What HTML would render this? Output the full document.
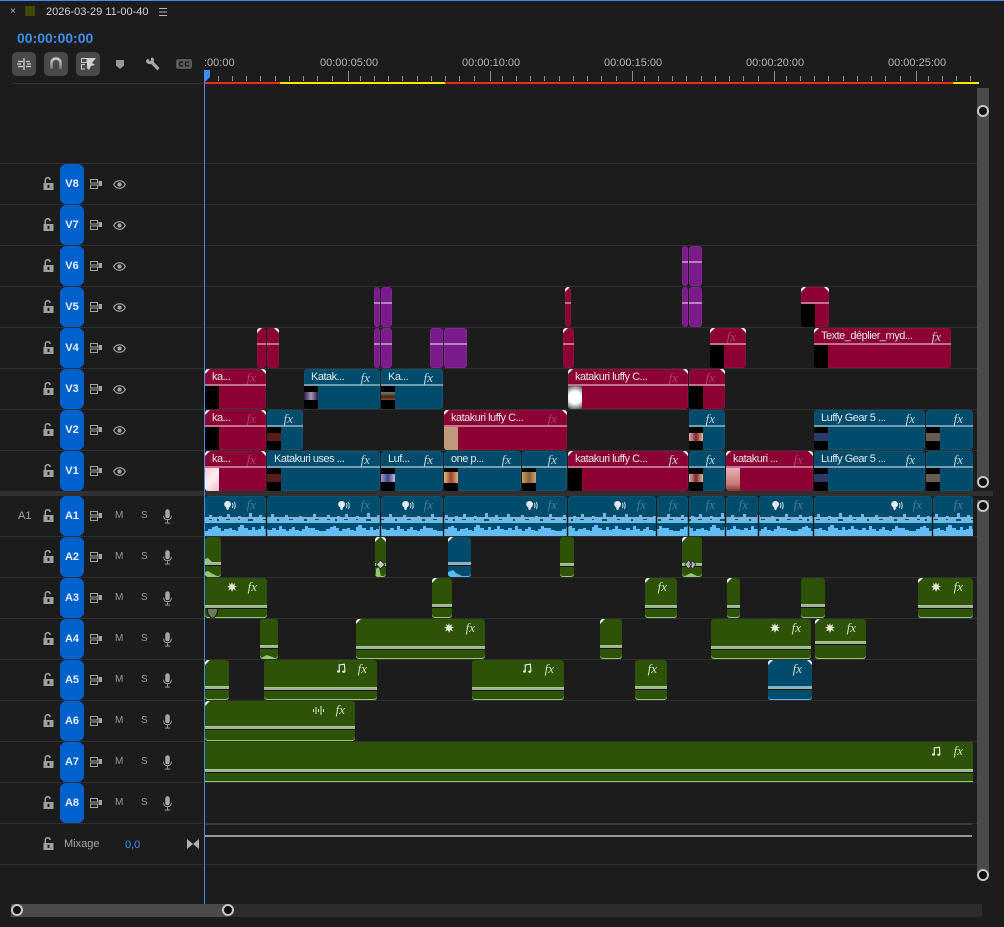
<!DOCTYPE html>
<html><head><meta charset="utf-8"><title>Timeline</title>
<style>
*{box-sizing:border-box}
html,body{margin:0;padding:0;background:#1c1c1c}
body{width:1004px;height:927px;position:relative;overflow:hidden;font-family:"Liberation Sans",sans-serif;color:#bbb}
.abs,.s,.h,.row,.c,.k,.h svg,.h span{position:absolute}
.s{left:0;width:977px;height:1px;background:#303030}
.row{left:0;width:977px;height:41px}
.h{left:0;width:204px;height:41px}
.k{left:60px;top:0;width:24px;height:40px;background:#0060cc;border-radius:6px;color:#e8f0fa;font:bold 11px/40px "Liberation Sans",sans-serif;text-align:center}
.h .m,.h .o{font-size:10px;line-height:10px;color:#999;top:15px}
.h .m{left:115px}.h .o{left:141px}
.c{top:0;height:40px;border-radius:3px;overflow:hidden;box-shadow:inset 0 0 0 1px rgba(255,255,255,.05)}
.c:after{content:"";position:absolute;left:0;right:0;top:15px;height:2px;background:rgba(255,255,255,.45)}
.n:after{display:none}
.r{background:#8c0034}.b{background:#014c6d}.p{background:#7b1a8a}.g{background:#2e5308}
.c b{position:absolute;left:7px;top:1px;font:normal 11px/14px "Liberation Sans",sans-serif;letter-spacing:-.5px;color:#e2e8ec;white-space:nowrap}
.c i{position:absolute;right:10px;top:1px;font:italic 13px/15px "Liberation Serif",serif;color:#c5d3d9}
.d i{color:rgba(255,255,255,.26)}
.c u{position:absolute;left:0;top:17px;bottom:0;width:13.500px;background:#000;text-decoration:none}
.c u s{position:absolute;left:0;top:6px;width:100%;height:8px;display:block}
.tl:before{content:"";position:absolute;top:0;left:0;width:0;height:0;border-top:5px solid #eee;border-right:5px solid transparent;z-index:2}
.trx{position:absolute;right:0;top:0;width:0;height:0;border-top:5px solid #eee;border-left:5px solid transparent;z-index:2}
.a{box-shadow:inset 0 -1px 0 #94c96f}
.a:after{top:var(--l);height:4px;background:linear-gradient(#9fcf7c 0 1px,#a5aea0 1px 3px,#101a06 3px 4px)}
.ab{box-shadow:inset 0 -1px 0 #5cb8f0}
.ab:after{background:linear-gradient(#5cb8f0 0 1px,#a5aea0 1px 3px,#101a06 3px 4px)}
.a i{color:#d4dfc5}
.a svg{position:absolute;left:0;top:0}
.f{position:absolute}
.lb{position:absolute;top:57px;font-size:11px;line-height:12px;color:#b5b5b5}
.btn{position:absolute;top:52px;width:24px;height:24px;border-radius:5px;background:#4a4a4a}
.knob{position:absolute;width:12px;height:12px;border-radius:50%;background:#0e0e0e;border:2px solid #c8c8c8}
</style></head><body>
<svg width="0" height="0" style="position:absolute">
<defs>
<symbol id="lock" viewBox="0 0 11 13"><path d="M.5 6h10v7H.5z" fill="#a0a0a0"/><path d="M2.300 6V3C2.300 1.500 3.300.7 4.700.7S7 1.500 7 3" fill="none" stroke="#a0a0a0" stroke-width="1.500"/><rect x="4.500" y="7.800" width="2" height="3.200" fill="#1c1c1c"/></symbol>
<symbol id="out" viewBox="0 0 12 10"><path d="M.5.5h7v3.500h-7zM.5 6h7v3.500h-7z" fill="none" stroke="#a5a5a5"/><path d="M8.500 2H12v5H8.500z" fill="#a5a5a5"/></symbol>
<symbol id="eye" viewBox="0 0 14 10"><path d="M.5 5C2.200 2 4.500.8 7 .8S11.800 2 13.500 5C11.800 8 9.500 9.200 7 9.200S2.200 8 .5 5z" fill="none" stroke="#a5a5a5" stroke-width="1.300"/><circle cx="7" cy="5" r="2.400" fill="#a5a5a5"/></symbol>
<symbol id="mic" viewBox="0 0 10 16"><rect x="2.500" y="0" width="5" height="10" rx="2.500" fill="#a5a5a5"/><path d="M.7 7c0 3 1.800 4.500 4.300 4.500S9.300 10 9.300 7M5 11.500V15M2 15.300h6" fill="none" stroke="#a5a5a5"/></symbol>
<symbol id="star" viewBox="0 0 12 12"><path d="M6 0l1 3.500L10 1 8.700 4.500 12 5 8.900 6.800 11 10 7.500 8.500 6 12 4.800 8.500 1.500 10 3 6.800 0 5.500 3.400 4.500 2 1l2.800 2.200z" fill="#e3e8d8"/></symbol>
<symbol id="note" viewBox="0 0 10 11"><path d="M2.500 8.500V1.500L8.200.8l.6 7.700" fill="none" stroke="#e3e8d8" stroke-width="1.300"/><ellipse cx="1.700" cy="8.800" rx="1.700" ry="1.300" fill="#e3e8d8"/><ellipse cx="7.500" cy="9" rx="1.700" ry="1.300" fill="#e3e8d8"/></symbol>
<symbol id="sp" viewBox="0 0 12 9"><path d="M3.500 0C5.500 0 7 1.300 7 3.300S5.700 6 5.200 6.500 5 9 3.500 9 2.700 7 2 6.300.2 5 .2 3.300 1.500 0 3.500 0z" fill="#dfe8ec"/><path d="M8.300 2c.8 1.500.8 3.500 0 5M10.300 1c1.100 2.200 1.100 5 0 7" fill="none" stroke="#cfdbe0"/></symbol>
<g id="wv">
<path d="M0 6V5H4V3H7V5H14V4H17V5H22V2H25V5H33V4H36V5H44V1H47V5H54V3H57V5H66V2H69V5H80V3H83V5H94V4H97V5H108V2H111V5H118V11H0Z" fill="#62bdf5"/>
<path d="M0 24V19H3V17H7V15H10V14H13V16H16V19H19V17H24V16H27V18H31V19H33V15H35V13H39V16H43V18H47V15H50V18H53V17H56V14H59V17H63V18H67V16H71V18H74V14H77V17H81V19H84V17H87V15H90V18H94V19H97V17H100V14H103V16H107V16H110V18H114V19H118V24Z" fill="#62bdf5"/>
<path d="M4 7h3v1H4zM12 7h2v2h-2zM21 7h4v1h-4zM33 7h2v1h-2zM43 7h5v2h-5zM58 7h3v1h-3zM72 7h2v2h-2zM84 7h4v1h-4zM99 7h3v2h-3zM110 7h4v1h-4z" fill="#0b4a68"/>
</g>
</defs>
</svg>

<div class="abs" style="left:0;top:0;width:1004px;height:1px;background:#3a8fee"></div>
<div class="abs" style="left:10px;top:7px;font-size:10px;line-height:10px;color:#bbb">×</div>
<div class="abs" style="left:25px;top:6px;width:10px;height:10px;background:#3f4a00"></div>
<div class="abs" style="left:46px;top:6px;font-size:11px;line-height:12px;color:#d0d0d0">2026-03-29 11-00-40</div>
<svg class="abs" style="left:159px;top:8px" width="8" height="8"><path d="M0 .5h8M0 4h8M0 7.500h8" stroke="#b5b5b5"/></svg>
<div class="abs" style="left:17px;top:30px;font-size:14px;font-weight:bold;line-height:16px;color:#3b8fe8">00:00:00:00</div>

<div class="btn" style="left:12px"><svg width="24" height="24"><path d="M12 6v12M5 12h4M15 12h4M6 9.500h5M14 9.500h4M6 14.500h5M14 14.500h5" stroke="#cfcfcf" stroke-width="1.300" fill="none"/></svg></div>
<div class="btn" style="left:44px"><svg width="24" height="24"><defs><linearGradient id="mg" x1="0" y1="0" x2="0" y2="1"><stop offset="0" stop-color="#cfcfcf"/><stop offset="1" stop-color="#777"/></linearGradient></defs><path d="M7.500 17V11a4.500 4.500 0 0 1 9 0v6" stroke="url(#mg)" stroke-width="2.600" fill="none"/></svg></div>
<div class="btn" style="left:76px"><svg width="24" height="24"><path d="M5.500 6.500h5.500v4H5.500zM9 12.500H5.500v4.500H9" fill="none" stroke="#cfcfcf"/><path d="M11 6h9l-4 5 3 2-4 1-2 4-2-2z" fill="#d0d0d0"/></svg></div>
<svg class="abs" style="left:116px;top:60px" width="8" height="9"><path d="M0 0h8v5.500l-4 3.500-4-3.500z" fill="#989898"/></svg>
<svg class="abs" style="left:145px;top:57px" width="15" height="15"><path d="M1 3.500L3 1.500l1.500 2.500 1.500-.5 0-2.500C7.500 0 9 1 9 3c0 .7-.2 1.200-.5 1.600L14.500 11l-2 2.500-6.300-6.500C4 7.500 .8 6.500 1 3.500z" fill="#a8a8a8"/></svg>
<svg class="abs" style="left:176px;top:59px" width="16" height="10"><rect width="16" height="10" rx="2.500" fill="#585858"/><path d="M7 3.200H4.500Q3.400 3.200 3.400 5T4.500 6.800H7M13 3.200h-2.500Q9.400 3.200 9.400 5t1.100 1.800H13" fill="none" stroke="#1c1c1c" stroke-width="1.300"/></svg>

<div class="lb" style="left:204px">:00:00</div>
<div class="lb" style="left:320px">00:00:05:00</div>
<div class="lb" style="left:462px">00:00:10:00</div>
<div class="lb" style="left:604px">00:00:15:00</div>
<div class="lb" style="left:746px">00:00:20:00</div>
<div class="lb" style="left:888px">00:00:25:00</div>

<svg class="abs" style="left:205px;top:70px" width="775" height="12">
<path d="M13.500 6v5M27.500 6v5M41.500 6v5M55.500 6v5M70.500 6v5M84.500 6v5M98.500 6v5M112.500 6v5M127.500 6v5M143.500 1v10M155.500 6v5M169.500 6v5M183.500 6v5M197.500 6v5M212.500 6v5M226.500 6v5M240.500 6v5M254.500 6v5M269.500 6v5M285.500 1v10M297.500 6v5M311.500 6v5M325.500 6v5M339.500 6v5M354.500 6v5M368.500 6v5M382.500 6v5M396.500 6v5M411.500 6v5M427.500 1v10M439.500 6v5M453.500 6v5M467.500 6v5M481.500 6v5M496.500 6v5M510.500 6v5M524.500 6v5M538.500 6v5M553.500 6v5M569.500 1v10M581.500 6v5M595.500 6v5M609.500 6v5M623.500 6v5M638.500 6v5M652.500 6v5M666.500 6v5M680.500 6v5M695.500 6v5M711.500 1v10M723.500 6v5M737.500 6v5M751.500 6v5M765.500 6v5" stroke="#8d8d8d"/></svg>
<div class="abs" style="left:205px;top:82px;width:75px;height:2px;background:#f02a20"></div>
<div class="abs" style="left:280px;top:82px;width:165px;height:2px;background:#f5e600"></div>
<div class="abs" style="left:445px;top:82px;width:508px;height:2px;background:#f02a20"></div>
<div class="abs" style="left:953px;top:82px;width:26px;height:2px;background:#f5e600"></div>
<div class="abs" style="left:12px;top:83px;width:192px;height:1px;background:#333"></div>

<div class="s" style="top:163px"></div><div class="s" style="top:204px"></div><div class="s" style="top:245px"></div><div class="s" style="top:286px"></div><div class="s" style="top:327px"></div><div class="s" style="top:368px"></div><div class="s" style="top:409px"></div><div class="s" style="top:450px"></div>
<div class="abs" style="left:0;top:491px;width:993px;height:5px;background:#303030"></div>
<div class="s" style="top:536px"></div><div class="s" style="top:577px"></div><div class="s" style="top:618px"></div><div class="s" style="top:659px"></div><div class="s" style="top:700px"></div><div class="s" style="top:741px"></div><div class="s" style="top:782px"></div><div class="s" style="top:823px"></div><div class="s" style="top:864px"></div>

<div class="h" style="top:164px"><svg style="left:43px;top:13px" width="11" height="13"><use href="#lock"/></svg><div class="k">V8</div><svg style="left:90px;top:15px" width="12" height="10"><use href="#out"/></svg><svg style="left:113px;top:16px" width="13" height="9"><use href="#eye"/></svg></div>
<div class="h" style="top:205px"><svg style="left:43px;top:13px" width="11" height="13"><use href="#lock"/></svg><div class="k">V7</div><svg style="left:90px;top:15px" width="12" height="10"><use href="#out"/></svg><svg style="left:113px;top:16px" width="13" height="9"><use href="#eye"/></svg></div>
<div class="h" style="top:246px"><svg style="left:43px;top:13px" width="11" height="13"><use href="#lock"/></svg><div class="k">V6</div><svg style="left:90px;top:15px" width="12" height="10"><use href="#out"/></svg><svg style="left:113px;top:16px" width="13" height="9"><use href="#eye"/></svg></div>
<div class="h" style="top:287px"><svg style="left:43px;top:13px" width="11" height="13"><use href="#lock"/></svg><div class="k">V5</div><svg style="left:90px;top:15px" width="12" height="10"><use href="#out"/></svg><svg style="left:113px;top:16px" width="13" height="9"><use href="#eye"/></svg></div>
<div class="h" style="top:328px"><svg style="left:43px;top:13px" width="11" height="13"><use href="#lock"/></svg><div class="k">V4</div><svg style="left:90px;top:15px" width="12" height="10"><use href="#out"/></svg><svg style="left:113px;top:16px" width="13" height="9"><use href="#eye"/></svg></div>
<div class="h" style="top:369px"><svg style="left:43px;top:13px" width="11" height="13"><use href="#lock"/></svg><div class="k">V3</div><svg style="left:90px;top:15px" width="12" height="10"><use href="#out"/></svg><svg style="left:113px;top:16px" width="13" height="9"><use href="#eye"/></svg></div>
<div class="h" style="top:410px"><svg style="left:43px;top:13px" width="11" height="13"><use href="#lock"/></svg><div class="k">V2</div><svg style="left:90px;top:15px" width="12" height="10"><use href="#out"/></svg><svg style="left:113px;top:16px" width="13" height="9"><use href="#eye"/></svg></div>
<div class="h" style="top:451px"><svg style="left:43px;top:13px" width="11" height="13"><use href="#lock"/></svg><div class="k">V1</div><svg style="left:90px;top:15px" width="12" height="10"><use href="#out"/></svg><svg style="left:113px;top:16px" width="13" height="9"><use href="#eye"/></svg></div>

<div class="h" style="top:496px"><span style="left:18px;top:14px;font-size:11px;line-height:13px;color:#a5a5a5">A1</span><svg style="left:43px;top:13px" width="11" height="13"><use href="#lock"/></svg><div class="k">A1</div><svg style="left:90px;top:15px" width="12" height="10"><use href="#out"/></svg><span class="m">M</span><span class="o">S</span><svg style="left:163px;top:13px" width="9" height="15"><use href="#mic"/></svg></div>
<div class="h" style="top:537px"><svg style="left:43px;top:13px" width="11" height="13"><use href="#lock"/></svg><div class="k">A2</div><svg style="left:90px;top:15px" width="12" height="10"><use href="#out"/></svg><span class="m">M</span><span class="o">S</span><svg style="left:163px;top:13px" width="9" height="15"><use href="#mic"/></svg></div>
<div class="h" style="top:578px"><svg style="left:43px;top:13px" width="11" height="13"><use href="#lock"/></svg><div class="k">A3</div><svg style="left:90px;top:15px" width="12" height="10"><use href="#out"/></svg><span class="m">M</span><span class="o">S</span><svg style="left:163px;top:13px" width="9" height="15"><use href="#mic"/></svg></div>
<div class="h" style="top:619px"><svg style="left:43px;top:13px" width="11" height="13"><use href="#lock"/></svg><div class="k">A4</div><svg style="left:90px;top:15px" width="12" height="10"><use href="#out"/></svg><span class="m">M</span><span class="o">S</span><svg style="left:163px;top:13px" width="9" height="15"><use href="#mic"/></svg></div>
<div class="h" style="top:660px"><svg style="left:43px;top:13px" width="11" height="13"><use href="#lock"/></svg><div class="k">A5</div><svg style="left:90px;top:15px" width="12" height="10"><use href="#out"/></svg><span class="m">M</span><span class="o">S</span><svg style="left:163px;top:13px" width="9" height="15"><use href="#mic"/></svg></div>
<div class="h" style="top:701px"><svg style="left:43px;top:13px" width="11" height="13"><use href="#lock"/></svg><div class="k">A6</div><svg style="left:90px;top:15px" width="12" height="10"><use href="#out"/></svg><span class="m">M</span><span class="o">S</span><svg style="left:163px;top:13px" width="9" height="15"><use href="#mic"/></svg></div>
<div class="h" style="top:742px"><svg style="left:43px;top:13px" width="11" height="13"><use href="#lock"/></svg><div class="k">A7</div><svg style="left:90px;top:15px" width="12" height="10"><use href="#out"/></svg><span class="m">M</span><span class="o">S</span><svg style="left:163px;top:13px" width="9" height="15"><use href="#mic"/></svg></div>
<div class="h" style="top:783px"><svg style="left:43px;top:13px" width="11" height="13"><use href="#lock"/></svg><div class="k">A8</div><svg style="left:90px;top:15px" width="12" height="10"><use href="#out"/></svg><span class="m">M</span><span class="o">S</span><svg style="left:163px;top:13px" width="9" height="15"><use href="#mic"/></svg></div>
<div class="h" style="top:824px"><svg style="left:43px;top:13px" width="11" height="13"><use href="#lock"/></svg><span style="left:64px;top:13px;font-size:11px;line-height:14px;color:#a5a5a5">Mixage</span><span style="left:125px;top:14px;font-size:11px;line-height:14px;color:#3b8fe8">0,0</span><svg style="left:187px;top:15px" width="12" height="10"><path d="M0 0l6 5-6 5zM12 0L6 5l6 5z" fill="#b0b0b0"/></svg></div>

<!-- V6 -->
<div class="row" style="top:246px">
<div class="c p" style="left:682px;width:6px"></div><div class="c p" style="left:689px;width:13px"></div>
</div>
<!-- V5 -->
<div class="row" style="top:287px">
<div class="c p" style="left:374px;width:6px"></div><div class="c p" style="left:381px;width:11px"></div>
<div class="c r tl" style="left:565px;width:6px"></div>
<div class="c p" style="left:682px;width:6px"></div><div class="c p" style="left:689px;width:13px"></div>
<div class="c r tl" style="left:801px;width:28px"><u></u><span class="trx"></span></div>
</div>
<!-- V4 -->
<div class="row" style="top:328px">
<div class="c r tl" style="left:257px;width:9px"></div><div class="c r" style="left:267px;width:12px"><span class="trx"></span></div>
<div class="c p" style="left:374px;width:6px"></div><div class="c p" style="left:381px;width:11px"></div>
<div class="c p" style="left:430px;width:13px"></div><div class="c p" style="left:444px;width:23px"></div>
<div class="c r tl" style="left:563px;width:11px"></div>
<div class="c r tl d" style="left:710px;width:36px"><i>fx</i><u></u><span class="trx"></span></div>
<div class="c r tl" style="left:814px;width:137px"><b>Texte_déplier_myd...</b><i>fx</i><u></u></div>
</div>
<!-- V3 -->
<div class="row" style="top:369px">
<div class="c r tl d" style="left:205px;width:61px"><b>ka...</b><i>fx</i><u></u><span class="trx"></span></div>
<div class="c b" style="left:304px;width:76px"><b>Katak...</b><i>fx</i><u><s style="background:linear-gradient(90deg,#2a1c3a,#a898b8,#2a1c3a)"></s></u></div>
<div class="c b" style="left:381px;width:62px"><b>Ka...</b><i>fx</i><u><s style="background:linear-gradient(#7a7a70,#3a2a20 60%,#a04020)"></s></u></div>
<div class="c r tl d" style="left:568px;width:120px"><b>katakuri luffy C...</b><i>fx</i><u style="background:radial-gradient(circle,#fff 45%,#555 95%)"></u><span class="trx"></span></div>
<div class="c r d" style="left:689px;width:36px"><i>fx</i><u></u><span class="trx"></span></div>
</div>
<!-- V2 -->
<div class="row" style="top:410px">
<div class="c r tl d" style="left:205px;width:61px"><b>ka...</b><i>fx</i><u></u><span class="trx"></span></div>
<div class="c b" style="left:267px;width:36px"><i>fx</i><u><s style="background:#5a1c18"></s></u></div>
<div class="c r tl d" style="left:444px;width:123px"><b>katakuri luffy C...</b><i>fx</i><u style="background:#c09a78"></u><span class="trx"></span></div>
<div class="c b" style="left:689px;width:36px"><i>fx</i><u><s style="background:linear-gradient(90deg,#d8b8b0,#8a2030,#e0c090)"></s></u></div>
<div class="c b" style="left:814px;width:111px"><b>Luffy Gear 5 ...</b><i>fx</i><u><s style="background:#2a3a68"></s></u></div>
<div class="c b" style="left:926px;width:47px"><i>fx</i><u><s style="background:#6a5a50"></s></u></div>
</div>
<!-- V1 -->
<div class="row" style="top:451px">
<div class="c r tl d" style="left:205px;width:61px"><b>ka...</b><i>fx</i><u style="background:linear-gradient(135deg,#f8c8d0,#fff0f0,#f8b8c8)"></u><span class="trx"></span></div>
<div class="c b" style="left:267px;width:113px"><b>Katakuri uses ...</b><i>fx</i><u><s style="background:#5a1c18"></s></u></div>
<div class="c b" style="left:381px;width:62px"><b>Luf...</b><i>fx</i><u><s style="background:linear-gradient(90deg,#9a9ac8,#40408a,#c0c0e0)"></s></u></div>
<div class="c b" style="left:444px;width:77px"><b>one p...</b><i>fx</i><u><s style="background:linear-gradient(90deg,#e0c080,#a04030,#e0b070);top:4px;height:11px"></s></u></div>
<div class="c b" style="left:522px;width:45px"><i>fx</i><u><s style="background:linear-gradient(90deg,#d8a050,#806040,#d0a060);top:4px;height:11px"></s></u></div>
<div class="c r tl" style="left:568px;width:120px"><b>katakuri luffy C...</b><i>fx</i><u></u><span class="trx"></span></div>
<div class="c b" style="left:689px;width:36px"><i>fx</i><u><s style="background:linear-gradient(90deg,#d8b8b0,#8a2030,#e0c090)"></s></u></div>
<div class="c r tl d" style="left:726px;width:87px"><b>katakuri ...</b><i>fx</i><u style="background:linear-gradient(#e8b0b8,#c87878 70%,#803820)"></u><span class="trx"></span></div>
<div class="c b" style="left:814px;width:111px"><b>Luffy Gear 5 ...</b><i>fx</i><u><s style="background:#2a3a68"></s></u></div>
<div class="c b" style="left:926px;width:47px"><i>fx</i><u><s style="background:#6a5a50"></s></u></div>
</div>
<!-- A1 -->
<div class="row" style="top:496px">
<div class="c b d n" style="left:205px;width:61px"><i>fx</i></div>
<div class="c b d n" style="left:267px;width:113px"><i>fx</i></div>
<div class="c b d n" style="left:381px;width:62px"><i>fx</i></div>
<div class="c b d n" style="left:444px;width:123px"><i>fx</i></div>
<div class="c b d n" style="left:568px;width:88px"><i>fx</i></div>
<div class="c b d n" style="left:657px;width:31px"><i>fx</i></div>
<div class="c b d n" style="left:689px;width:36px"><i>fx</i></div>
<div class="c b d n" style="left:726px;width:32px"><i>fx</i></div>
<div class="c b d n" style="left:759px;width:54px"><i>fx</i></div>
<div class="c b d n" style="left:814px;width:118px"><i>fx</i></div>
<div class="c b d n" style="left:933px;width:40px"><i>fx</i></div>
<svg class="f" style="left:224px;top:5px" width="12" height="9"><use href="#sp"/></svg>
<svg class="f" style="left:338px;top:5px" width="12" height="9"><use href="#sp"/></svg>
<svg class="f" style="left:402px;top:5px" width="12" height="9"><use href="#sp"/></svg>
<svg class="f" style="left:526px;top:5px" width="12" height="9"><use href="#sp"/></svg>
<svg class="f" style="left:614px;top:5px" width="12" height="9"><use href="#sp"/></svg>
<svg class="f" style="left:772px;top:5px" width="12" height="9"><use href="#sp"/></svg>
<svg class="f" style="left:891px;top:5px" width="12" height="9"><use href="#sp"/></svg>
</div>
<svg class="abs" style="left:205px;top:512px;z-index:1" width="768" height="24">
<rect y="7" width="768" height="4" fill="#62bdf5"/>
<rect y="19" width="768" height="5" fill="#62bdf5"/>
<use href="#wv" x="0"/><use href="#wv" x="118"/><use href="#wv" x="236"/><use href="#wv" x="354"/><use href="#wv" x="472"/><use href="#wv" x="590"/><use href="#wv" x="708"/>
<rect y="5.500" width="768" height="1.500" fill="#9fb0b8"/>
<path d="M61.500 0v24M175.500 0v24M238.500 0v24M362.500 0v24M451.500 0v24M483.500 0v24M520.500 0v24M553.500 0v24M608.500 0v24M727.500 0v24" stroke="#1c1c1c" stroke-width="1.500"/>
</svg>
<!-- A2 -->
<div class="row" style="top:537px">
<div class="c g a" style="left:205px;width:16px;--l:25px"><svg width="16" height="40"><path d="M0 25v-3l3-1 4 4zM0 39v-4l3-1 3 2 6 3z" fill="#94c96f"/></svg></div>
<div class="c g a tl" style="left:375px;width:11px;--l:26px"><svg width="11" height="40"><path d="M1 40V32l3-2 2 10z" fill="#94c96f"/></svg><span class="trx"></span></div>
<svg class="f" style="left:376px;top:23px;z-index:3" width="9" height="9"><path d="M4.500 0L9 4.500 4.500 9 0 4.500z" fill="#c0c8b8" stroke="#222"/></svg>
<div class="c b a ab tl" style="left:448px;width:23px;--l:25px"><svg width="23" height="40"><path d="M0 39v-4l5-2 3 3 6 3z" fill="#5cb8f0"/></svg></div>
<div class="c g a" style="left:560px;width:14px;--l:26px"></div>
<div class="c g a tl" style="left:682px;width:20px;--l:26px"><svg width="20" height="40"><path d="M3 39l6-3 6 3z" fill="#94c96f"/></svg></div>
<svg class="f" style="left:685px;top:23px;z-index:3" width="11" height="9"><path d="M3.500 0L7 4.500 3.500 9 0 4.500zM7.500 1L11 4.500 7.500 9 4.500 4.500z" fill="#b5b5b5" stroke="#222" stroke-width=".7"/></svg>
</div>
<!-- A3 -->
<div class="row" style="top:578px">
<div class="c g a" style="left:205px;width:62px;--l:27px"><svg class="f" style="left:22px;top:4px" width="10" height="10"><use href="#star"/></svg><svg width="14" height="40"><path d="M2 30h11l-1 6-3 4H6l-3-4z" fill="#6a7a58" stroke="#111"/></svg><i>fx</i></div>
<div class="c g a tl" style="left:432px;width:20px;--l:26px"></div>
<div class="c g a tl" style="left:645px;width:32px;--l:27px"><i>fx</i></div>
<div class="c g a tl" style="left:727px;width:13px;--l:27px"></div>
<div class="c g a" style="left:801px;width:24px;--l:26px"></div>
<div class="c g a tl" style="left:918px;width:55px;--l:27px"><svg class="f" style="left:13px;top:4px" width="10" height="10"><use href="#star"/></svg><i>fx</i></div>
</div>
<!-- A4 -->
<div class="row" style="top:619px">
<div class="c g a" style="left:260px;width:18px;--l:26px"><svg width="18" height="40"><path d="M1 39l6-3 8 3z" fill="#94c96f"/></svg></div>
<div class="c g a tl" style="left:356px;width:129px;--l:27px"><svg class="f" style="left:88px;top:4px" width="10" height="10"><use href="#star"/></svg><i>fx</i></div>
<div class="c g a tl" style="left:600px;width:22px;--l:26px"></div>
<div class="c g a" style="left:711px;width:100px;--l:27px"><svg class="f" style="left:59px;top:4px" width="10" height="10"><use href="#star"/></svg><i>fx</i></div>
<div class="c g a tl" style="left:815px;width:51px;--l:22px"><svg class="f" style="left:10px;top:4px" width="10" height="10"><use href="#star"/></svg><i>fx</i></div>
</div>
<!-- A5 -->
<div class="row" style="top:660px">
<div class="c g a tl" style="left:205px;width:24px;--l:26px"></div>
<div class="c g a" style="left:264px;width:113px;--l:27px"><svg class="f" style="left:73px;top:3px" width="9" height="11"><use href="#note"/></svg><i>fx</i></div>
<div class="c g a" style="left:472px;width:92px;--l:27px"><svg class="f" style="left:51px;top:3px" width="9" height="11"><use href="#note"/></svg><i>fx</i></div>
<div class="c g a" style="left:635px;width:32px;--l:26px"><i>fx</i></div>
<div class="c b a ab tl" style="left:768px;width:44px;--l:26px"><i>fx</i><span class="trx"></span></div>
</div>
<!-- A6 -->
<div class="row" style="top:701px">
<div class="c g a tl" style="left:205px;width:150px;--l:25px"><svg class="f" style="left:108px;top:5px" width="11" height="9"><path d="M.5 3v3M3 1v7M5.500 3v3M8 0v9M10.500 3v3" stroke="#e3e8d8"/></svg><i>fx</i></div>
</div>
<!-- A7 -->
<div class="row" style="top:742px">
<div class="c g a" style="left:205px;width:768px;--l:27px;border-radius:0"><svg class="f" style="left:727px;top:4px" width="9" height="11"><use href="#note"/></svg><i>fx</i></div>
</div>
<!-- Mix -->
<div class="abs" style="left:205px;top:823px;width:767px;height:2px;background:#383838"></div>
<div class="abs" style="left:205px;top:835px;width:767px;height:2px;background:#999"></div>

<!-- playhead -->
<div class="abs" style="left:204px;top:80px;width:1px;height:824px;background:#3a8fee;z-index:2"></div>
<svg class="abs" style="left:204px;top:70px;z-index:2" width="7" height="12"><path d="M0 0h6v7l-4 4H0z" fill="#3a8fee"/></svg>

<!-- scrollbars -->
<div class="abs" style="left:977px;top:88px;width:12px;height:394px;background:#4a4a4a"></div>
<div class="abs" style="left:977px;top:500px;width:12px;height:375px;background:#4a4a4a"></div>
<div class="knob" style="left:977px;top:105px"></div>
<div class="knob" style="left:977px;top:476px"></div>
<div class="knob" style="left:977px;top:500px"></div>
<div class="knob" style="left:977px;top:869px"></div>
<div class="abs" style="left:11px;top:904px;width:971px;height:13px;background:#2c2c2c"></div>
<div class="abs" style="left:11px;top:904px;width:217px;height:13px;background:#4a4a4a"></div>
<div class="knob" style="left:11px;top:904px"></div>
<div class="knob" style="left:222px;top:904px"></div>
</body></html>
